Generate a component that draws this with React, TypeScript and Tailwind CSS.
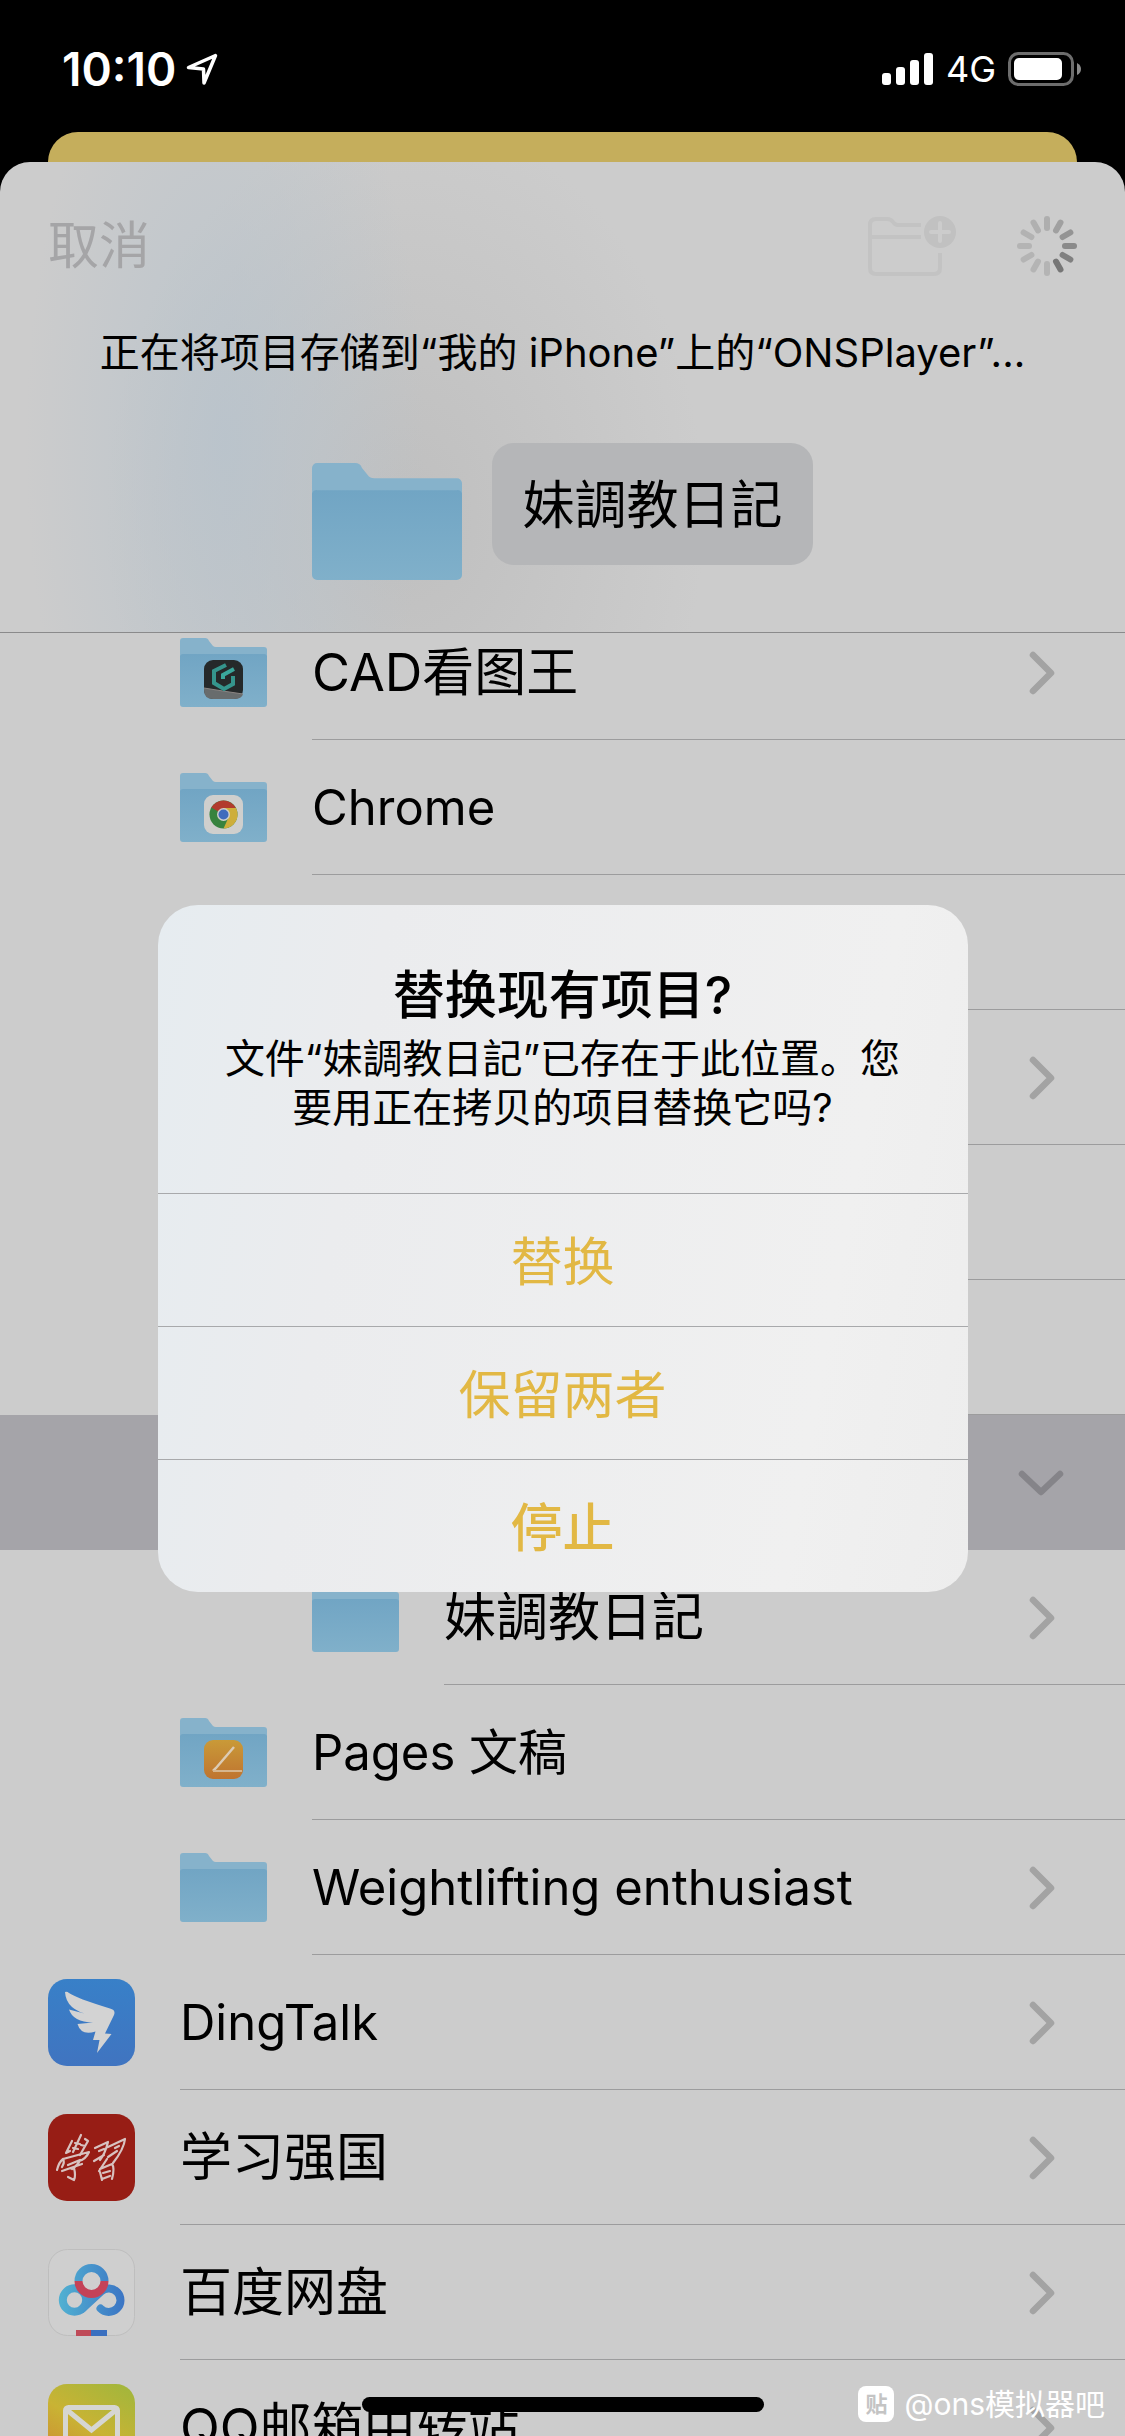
import type { ReactNode } from "react";

type Badge = "cad" | "chrome" | "pages";
type AppIcon = "dingtalk" | "xuexi" | "baidu" | "qqmail";

interface Item {
  id: number;
  name: string;
  level: 0 | 1 | 2;
  latin?: boolean;
  icon?: "folder" | AppIcon;
  badge?: Badge;
  arrow?: "right" | "down";
  selected?: boolean;
}

const items: Item[] = [
  { id: 1, name: "CAD看图王", level: 1, icon: "folder", badge: "cad", arrow: "right" },
  { id: 2, name: "Chrome", level: 1, latin: true, icon: "folder", badge: "chrome" },
  { id: 3, name: "", level: 1 },
  { id: 4, name: "", level: 1, arrow: "right" },
  { id: 5, name: "", level: 1 },
  { id: 6, name: "", level: 1 },
  { id: 7, name: "", level: 1, arrow: "down", selected: true },
  { id: 8, name: "妹調教日記", level: 2, icon: "folder", arrow: "right" },
  { id: 9, name: "Pages 文稿", level: 1, latin: true, icon: "folder", badge: "pages" },
  { id: 10, name: "Weightlifting enthusiast", level: 1, latin: true, icon: "folder", arrow: "right" },
  { id: 11, name: "DingTalk", level: 0, latin: true, icon: "dingtalk", arrow: "right" },
  { id: 12, name: "学习强国", level: 0, icon: "xuexi", arrow: "right" },
  { id: 13, name: "百度网盘", level: 0, icon: "baidu", arrow: "right" },
  { id: 14, name: "QQ邮箱中转站", level: 0, icon: "qqmail", arrow: "right" },
];

const indents = { 0: "pl-12", 1: "pl-[180px]", 2: "pl-[312px]" };

function FolderIcon({ className, badge }: { className: string; badge?: Badge }) {
  return (
    <svg viewBox="0 0 87 69" preserveAspectRatio="none" className={className} aria-hidden="true">
      <defs>
        <linearGradient id="folderFront" x1="0" y1="0" x2="0" y2="1">
          <stop offset="0" stopColor="#71a5c4" />
          <stop offset="1" stopColor="#80b0ca" />
        </linearGradient>
      </defs>
      <path d="M0 3a3 3 0 0 1 3-3h22q3 0 4 3l4 5q1 1 3 1h48a3 3 0 0 1 3 3v20H0z" fill="#86b2cb" />
      <path d="M0 18a3 3 0 0 1 3-2h81a3 3 0 0 1 3 2v48a3 3 0 0 1-3 3H3a3 3 0 0 1-3-3z" fill="url(#folderFront)" />
      {badge === "cad" && (
        <g>
          <rect x="24" y="22" width="39" height="39" rx="9" fill="#25292a" />
          <path d="M24 50q18 3 39 6q-1 5-9 5H33q-9 0-9-9z" fill="#686c6d" />
          <path d="M24 50q18 3 39 6" stroke="#8b8583" fill="none" />
          <path d="M46 27l-12 6v12l10 6 9-5v-8" fill="none" stroke="#35958d" strokeWidth="4" />
          <path d="M43 41v-4l11-6" stroke="#3aa79c" strokeWidth="4" fill="none" />
        </g>
      )}
      {badge === "chrome" && (
        <g>
          <rect x="24" y="22" width="39" height="39" rx="9" fill="#cfcfcd" />
          <circle cx="43.500" cy="41.500" r="14" fill="#37833f" />
          <path d="M43.500 41.500L31.400 34.500a14 14 0 0 1 24.200 0z" fill="#b23b2d" />
          <path d="M43.500 41.500L43.500 35h12.500a14 14 0 0 1-12.500 20.500l5-11z" fill="#ceae3a" />
          <circle cx="43.500" cy="41.500" r="6.500" fill="#cfcfcd" />
          <circle cx="43.500" cy="41.500" r="5" fill="#406bbd" />
        </g>
      )}
      {badge === "pages" && (
        <g>
          <defs>
            <linearGradient id="pagesFill" x1="0" y1="0" x2="0" y2="1">
              <stop offset="0" stopColor="#c99a38" />
              <stop offset="1" stopColor="#bf7430" />
            </linearGradient>
          </defs>
          <rect x="24" y="22" width="39" height="39" rx="9" fill="url(#pagesFill)" />
          <path d="M54 29L36 50l-3 3" stroke="#dccbb4" strokeWidth="2.500" fill="none" />
          <path d="M33 53h29" stroke="#d7b58c" strokeWidth="2" />
        </g>
      )}
    </svg>
  );
}

function DingTalkIcon() {
  return (
    <svg viewBox="0 0 87 87" className="size-[87px] shrink-0" aria-hidden="true">
      <defs>
        <linearGradient id="dingFill" x1="0" y1="0" x2="0" y2="1">
          <stop offset="0" stopColor="#3880c8" />
          <stop offset="1" stopColor="#4074c0" />
        </linearGradient>
      </defs>
      <rect width="87" height="87" rx="19" fill="url(#dingFill)" />
      <path
        d="M17 13Q19 12 21 14 28 19 62 29.500 68 31 66 36L57 54.500 63.500 55 49 74 51.500 61H45L47.500 52.500Q33 57 29.500 45L45 43.500Q25 43 21 30.500L42 36Q18 31 17 13z"
        fill="#d3d3d3"
      />
    </svg>
  );
}

function XuexiIcon() {
  return (
    <svg viewBox="0 0 87 87" className="size-[87px] shrink-0" aria-hidden="true">
      <rect width="87" height="87" rx="19" fill="#971d15" />
      <g fill="none" stroke="#d8c2c0" strokeWidth="2.200" strokeLinecap="round" strokeLinejoin="round">
        <path d="M24 27l-6 12 4-2M33 21l-8 17M27 29l5 1M25 34l5 1M37 25l3 2-8 14M33 31l4 1" />
        <path d="M9 56q2-8 6-11 2 3-1 8M15 45l26-7q-3 7-10 9M20 51l12-5q-2 5-8 9M14 57l20-7M26 54q2 8 0 12l-6-3" />
        <path d="M47 34l13-6q-3 12-8 18M51 37l5-2M46 47l10-6M60 33l17-8q-1 10-12 24M67 34l4-2M60 43l9-6" />
        <path d="M59 45l-8 12M52 55l12-5q3 4 0 15M54 66l-2-8M55 59l7-2M54 65l8-3" />
      </g>
    </svg>
  );
}

function BaiduIcon() {
  return (
    <svg viewBox="0 0 87 87" className="size-[87px] shrink-0" aria-hidden="true">
      <defs>
        <linearGradient id="panBlue" gradientUnits="userSpaceOnUse" x1="10" y1="0" x2="77" y2="0">
          <stop offset="0" stopColor="#52b2d2" />
          <stop offset="1" stopColor="#3b74c4" />
        </linearGradient>
      </defs>
      <rect x="0.500" y="0.500" width="86" height="86" rx="19" fill="#cfcfcf" stroke="#bebebe" />
      <g fill="none" stroke="url(#panBlue)" strokeWidth="8">
        <circle cx="26.500" cy="51" r="11.700" />
        <path d="M34 60L53 42.500A11.700 11.700 0 1 1 52.500 59.500" strokeLinecap="round" />
        <path d="M30.500 32a13 13 0 0 1 26 0" />
      </g>
      <path d="M30.500 32a13 13 0 0 0 26 0" fill="none" stroke="#c44258" strokeWidth="8" />
      <path d="M28 81h15v6H28z" fill="#bf4a58" />
      <path d="M43 81h16v6H43z" fill="#3b70c0" />
    </svg>
  );
}

function QQMailIcon() {
  return (
    <svg viewBox="0 0 87 87" className="size-[87px] shrink-0" aria-hidden="true">
      <defs>
        <linearGradient id="mailFill" x1="0.800" y1="0" x2="0.200" y2="1">
          <stop offset="0" stopColor="#a5b63b" />
          <stop offset="0.500" stopColor="#c9b334" />
          <stop offset="1" stopColor="#cd8a32" />
        </linearGradient>
      </defs>
      <rect width="87" height="87" rx="19" fill="url(#mailFill)" />
      <rect x="17.500" y="23.500" width="52" height="40" rx="3" fill="none" stroke="#d6d6d2" strokeWidth="5" />
      <path d="M19 26l24.500 20L68 26" fill="none" stroke="#d6d6d2" strokeWidth="5" />
    </svg>
  );
}

const appIcons: Record<AppIcon, ReactNode> = {
  dingtalk: <DingTalkIcon />,
  xuexi: <XuexiIcon />,
  baidu: <BaiduIcon />,
  qqmail: <QQMailIcon />,
};

function Arrow({ direction }: { direction: "right" | "down" }) {
  return (
    <svg viewBox="0 0 48 48" className="size-12 shrink-0" aria-hidden="true">
      <path
        d={direction === "right" ? "M16 6l18 18-18 18" : "M5 15l19 18 19-18"}
        fill="none"
        stroke={direction === "right" ? "#a3a3a3" : "#858489"}
        strokeWidth="6.500"
        strokeLinecap="round"
        strokeLinejoin="round"
      />
    </svg>
  );
}

function Row({ item }: { item: Item }) {
  return (
    <li className={`flex h-[135px] shrink-0 items-center gap-[45px] ${indents[item.level]} ${item.selected ? "bg-[#a5a4a9]" : ""}`}>
      {item.icon === "folder" && <FolderIcon className="h-[69px] w-[87px] shrink-0" badge={item.badge} />}
      {item.icon && item.icon !== "folder" && appIcons[item.icon]}
      {!item.icon && <div className="w-[87px] shrink-0" />}
      <div
        className={`flex h-full min-w-0 grow items-center justify-between border-b pt-[2px] pr-[60px] ${
          item.selected ? "border-transparent" : "border-[#9c9c9d]"
        }`}
      >
        <span className={`truncate leading-[68px] ${item.latin ? "text-[49px]" : "text-[52px]"}`}>{item.name}</span>
        {item.arrow && <Arrow direction={item.arrow} />}
      </div>
    </li>
  );
}

function StatusBar() {
  return (
    <div className="flex h-[132px] shrink-0 items-center justify-between pt-[6px] pr-[43px] pl-[62px] text-white">
      <div className="flex items-center gap-[10px]">
        <span className="text-[46px] leading-[60px] font-semibold">10:10</span>
        <svg viewBox="0 0 32 32" className="size-8" aria-hidden="true">
          <path d="M29.500 2.500L2.500 14.500l15 1.500.5 14z" fill="none" stroke="#fff" strokeWidth="3.500" strokeLinejoin="round" />
        </svg>
      </div>
      <div className="flex items-center gap-3">
        <svg viewBox="0 0 52 33" className="h-[33px] w-[52px]" fill="#fff" aria-hidden="true">
          <rect x="0" y="20" width="9" height="12" rx="3" />
          <rect x="14" y="14" width="9" height="18" rx="3" />
          <rect x="28" y="7" width="9" height="25" rx="3" />
          <rect x="42" y="0" width="9" height="32" rx="3" />
        </svg>
        <span className="text-[36px] leading-[48px]">4G</span>
        <svg viewBox="0 0 74 34" className="h-[34px] w-[74px]" aria-hidden="true">
          <rect x="1.500" y="1.500" width="63" height="31" rx="9" fill="none" stroke="#6d6d6d" strokeWidth="3" />
          <rect x="6" y="6" width="48" height="22" rx="5" fill="#fff" />
          <path d="M69 11q4 2 4 6t-4 6z" fill="#8a8a8a" />
        </svg>
      </div>
    </div>
  );
}

const spokes = ["#8a8a8a", "#808080", "#767676", "#b4b4b4", "#b4b4b4", "#b4b4b4", "#b4b4b4", "#b2b2b2", "#b0b0b0", "#aeaeae", "#a0a0a0", "#949494"];

function SheetHeader() {
  return (
    <header className="shrink-0 border-b border-[#8a8a8b] bg-[radial-gradient(ellipse_200px_480px_at_20%_60%,#b8c3ccdd,transparent),radial-gradient(ellipse_300px_400px_at_36%_75%,#bfbfbf,transparent)]">
      <div className="flex items-center justify-between px-12 pt-12">
        <button className="text-[51px] leading-[72px] text-[#a5a5a7]">取消</button>
        <div className="flex items-center gap-[60px]">
          <button aria-label="新建文件夹">
            <svg viewBox="0 0 90 64" className="h-16 w-[90px]" aria-hidden="true">
              <g fill="none" stroke="#c3c3c3" strokeWidth="4">
                <path d="M54 11H31q-3 0-5-3-2-3-6-3H9q-6 0-6 6v43q0 6 6 6h58q6 0 6-6V39M3 23h51" />
              </g>
              <circle cx="73" cy="18" r="16" fill="#c1c1c1" />
              <path d="M73 9v18M64 18h18" stroke="#cccccc" strokeWidth="4" strokeLinecap="round" />
            </svg>
          </button>
          <svg viewBox="0 0 60 60" className="size-[60px]" role="img" aria-label="载入中">
            {spokes.map((color, i) => (
              <path key={i} d="M48 30h9" stroke={color} strokeWidth="6" strokeLinecap="round" transform={`rotate(${i * 30} 30 30)`} />
            ))}
          </svg>
        </div>
      </div>
      <h1 className="pt-[43px] text-center text-[40px] leading-[56px]">正在将项目存储到“我的 iPhone”上的“ONSPlayer”...</h1>
      <div className="flex items-start justify-center gap-[30px] pt-[62px] pb-[52px]">
        <FolderIcon className="mt-5 h-[117px] w-[150px]" />
        <button className="rounded-[22px] bg-[#b5b6b8] px-[30px] pt-1 text-[52px] leading-[118px]">妹調教日記</button>
      </div>
    </header>
  );
}

function ReplaceDialog() {
  const actions = ["替换", "保留两者", "停止"];
  return (
    <div
      role="alertdialog"
      aria-labelledby="dialog-title"
      aria-describedby="dialog-message"
      className="absolute top-[905px] left-1/2 w-[810px] -translate-x-1/2 overflow-hidden rounded-[40px] bg-[linear-gradient(100deg,#e6ecf0,#ebecee_25%,#f0f0f0_80%,#ededed)]"
    >
      <div className="px-12 pt-[57px] pb-[61px] text-center">
        <h2 id="dialog-title" className="mb-1 text-[52px] leading-[68px] font-medium">
          替换现有项目?
        </h2>
        <p id="dialog-message" className="text-[40px] leading-[49px]">
          文件“妹調教日記”已存在于此位置。您
          <br />
          要用正在拷贝的项目替换它吗?
        </p>
      </div>
      {actions.map((action) => (
        <button
          key={action}
          className={`block w-full border-t border-[#a8a9ab] pt-[6px] text-[52px] leading-[126px] text-[#e2b844] ${
            action === "停止" ? "font-medium" : ""
          }`}
        >
          {action}
        </button>
      ))}
    </div>
  );
}

export default function App() {
  return (
    <div className="relative flex h-screen flex-col overflow-hidden bg-black font-[Inter,'Noto_Sans_CJK_SC',sans-serif] text-black">
      <StatusBar />
      <div className="mx-12 h-[30px] shrink-0 rounded-t-[30px] bg-[#c5ae5c]" />
      <main className="flex min-h-0 grow flex-col overflow-hidden rounded-t-[30px] bg-[#cccccc]">
        <SheetHeader />
        <ul className="-mt-7 flex min-h-0 grow flex-col">
          {items.map((item) => (
            <Row key={item.id} item={item} />
          ))}
        </ul>
      </main>

      <ReplaceDialog />

      {/* Home indicator */}
      <div className="absolute bottom-6 left-1/2 h-[15px] w-[402px] -translate-x-1/2 rounded-full bg-black" />

      {/* Watermark */}
      <div className="absolute right-5 bottom-2 flex items-center gap-[10px] text-white">
        <span className="flex size-9 items-center justify-center rounded-lg bg-white text-[22px] leading-9 font-semibold text-[#c4c4c4]">贴</span>
        <span className="text-[30px] leading-[48px]">@ons模拟器吧</span>
      </div>
    </div>
  );
}
